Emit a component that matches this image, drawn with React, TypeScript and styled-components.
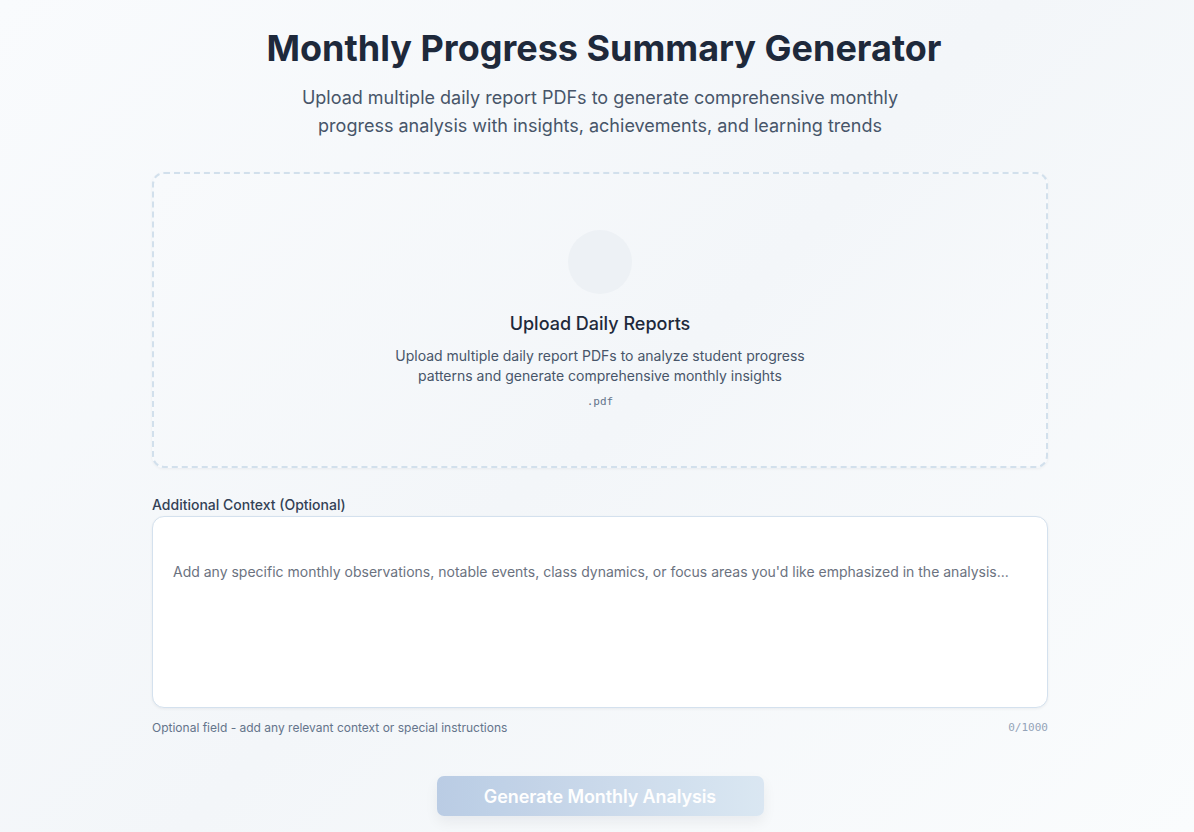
import React from "react";
import styled, { createGlobalStyle } from "styled-components";

const GlobalStyle = createGlobalStyle`
  html, body {
    margin: 0;
    padding: 0;
  }
  body {
    font-family: Inter, "Noto Sans", "Liberation Sans", sans-serif;
    background: linear-gradient(135deg, #f9fbfd 0%, #f3f6f9 50%, #fafcfd 100%);
    min-height: 832px;
    overflow: hidden;
  }
`;

const Page = styled.div`
  min-height: 832px;
  padding: 28px 0 0 6px;
  box-sizing: border-box;
`;

const Container = styled.main`
  max-width: 896px;
  margin: 0 auto;
  display: flex;
  flex-direction: column;
`;

const Header = styled.header`
  display: flex;
  flex-direction: column;
  align-items: center;
  gap: 16px;
  margin-bottom: 32px;
`;

const Title = styled.h1`
  margin: 0;
  padding-left: 8px;
  font-size: 36px;
  line-height: 40px;
  font-weight: 700;
  color: #1e293b;
  text-align: center;
`;

const Subtitle = styled.p`
  margin: 0;
  max-width: 620px;
  font-size: 18px;
  line-height: 28px;
  color: #475569;
  text-align: center;
`;

const DropZone = styled.div`
  border: 2px dashed #d2e0ec;
  border-radius: 12px;
  background: linear-gradient(135deg, #f8fafc 0%, #f3f6f9 60%, #f8fafc 100%);
  padding: 56px 24px;
  display: flex;
  flex-direction: column;
  align-items: center;
  text-align: center;
  box-shadow: 0 1px 3px rgba(15, 23, 42, 0.05);
`;

const IconCircle = styled.div`
  width: 64px;
  height: 64px;
  border-radius: 50%;
  background: #edf1f5;
  margin-bottom: 16px;
`;

const DropTitle = styled.h3`
  margin: 0 0 8px;
  font-size: 18px;
  line-height: 28px;
  font-weight: 500;
  color: #1e293b;
`;

const DropText = styled.p`
  margin: 0 0 8px;
  max-width: 448px;
  font-size: 14px;
  line-height: 20px;
  color: #475569;
`;

const FileType = styled.span`
  font-family: "DejaVu Sans Mono", "Liberation Mono", monospace;
  font-size: 11px;
  line-height: 16px;
  color: #64748b;
`;

const Field = styled.div`
  margin-top: 27px;
  display: flex;
  flex-direction: column;
`;

const Label = styled.label`
  font-size: 14px;
  line-height: 20px;
  font-weight: 500;
  color: #334155;
  margin-bottom: 1px;
`;

const TextArea = styled.textarea`
  box-sizing: border-box;
  width: 100%;
  height: 192px;
  resize: none;
  border: 1px solid #d4e1ee;
  border-radius: 12px;
  background: #ffffff;
  padding: 45px 20px 16px;
  font-family: Inter, "Noto Sans", sans-serif;
  font-size: 14px;
  line-height: 20px;
  color: #1e293b;
  outline: none;
  box-shadow: 0 1px 3px rgba(15, 23, 42, 0.06);

  &::placeholder {
    color: #6b7280;
  }
`;

const HelpRow = styled.div`
  margin-top: 12px;
  display: flex;
  justify-content: space-between;
  align-items: center;
`;

const HelpText = styled.span`
  font-size: 12px;
  line-height: 16px;
  color: #64748b;
`;

const Counter = styled.span`
  font-family: "DejaVu Sans Mono", "Liberation Mono", monospace;
  font-size: 11px;
  line-height: 16px;
  color: #94a3b8;
`;

const Actions = styled.div`
  margin-top: 40px;
  display: flex;
  justify-content: center;
`;

const GenerateButton = styled.button`
  width: 327px;
  height: 40px;
  border: none;
  border-radius: 7px;
  background: linear-gradient(90deg, #b7cae3 0%, #d9e6f2 100%);
  color: #ffffff;
  font-family: Inter, "Noto Sans", sans-serif;
  font-size: 18px;
  font-weight: 600;
  letter-spacing: -0.1px;
  cursor: not-allowed;
  opacity: 0.95;
  box-shadow: 0 6px 14px rgba(15, 23, 42, 0.06);
`;

export default function App() {
  return (
    <>
      <GlobalStyle />
      <Page>
        <Container>
          <Header>
            <Title>Monthly Progress Summary Generator</Title>
            <Subtitle>
              Upload multiple daily report PDFs to generate comprehensive monthly
              progress analysis with insights, achievements, and learning trends
            </Subtitle>
          </Header>

          <DropZone>
            <IconCircle />
            <DropTitle>Upload Daily Reports</DropTitle>
            <DropText>
              Upload multiple daily report PDFs to analyze student progress
              patterns and generate comprehensive monthly insights
            </DropText>
            <FileType>.pdf</FileType>
          </DropZone>

          <Field>
            <Label htmlFor="ctx">Additional Context (Optional)</Label>
            <TextArea
              id="ctx"
              placeholder="Add any specific monthly observations, notable events, class dynamics, or focus areas you'd like emphasized in the analysis..."
            />
            <HelpRow>
              <HelpText>Optional field - add any relevant context or special instructions</HelpText>
              <Counter>0/1000</Counter>
            </HelpRow>
          </Field>

          <Actions>
            <GenerateButton disabled>Generate Monthly Analysis</GenerateButton>
          </Actions>
        </Container>
      </Page>
    </>
  );
}
